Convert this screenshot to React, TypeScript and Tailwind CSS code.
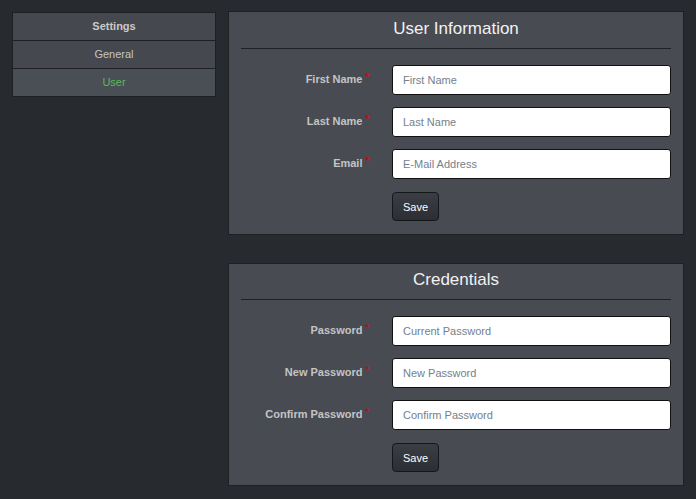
import React from 'react'

type Field = { label: string; placeholder: string; type?: string }

const userFields: Field[] = [
  { label: 'First Name', placeholder: 'First Name' },
  { label: 'Last Name', placeholder: 'Last Name' },
  { label: 'Email', placeholder: 'E-Mail Address', type: 'email' },
]

const credentialFields: Field[] = [
  { label: 'Password', placeholder: 'Current Password', type: 'password' },
  { label: 'New Password', placeholder: 'New Password', type: 'password' },
  { label: 'Confirm Password', placeholder: 'Confirm Password', type: 'password' },
]

function Panel({ title, fields, className = '' }: { title: string; fields: Field[]; className?: string }) {
  return (
    <div className={`border border-[#1e2024] bg-[#484b52] px-[12px] pb-[13px] ${className}`}>
      <h2 className="text-center text-[17px] leading-[20px] text-[#f2f2f2]">{title}</h2>
      <div className="mt-[9px] h-px bg-[#1f2125]" />
      <form className="mt-[16px] flex flex-col gap-[12px]" onSubmit={(e) => e.preventDefault()}>
        {fields.map((f) => (
          <div key={f.label} className="flex items-start">
            <label className="w-[151px] shrink-0 pr-[23px] pt-[7px] text-right text-[11px] leading-[15px] font-bold text-[#c4c4c4]">
              {f.label}
              <span className="ml-[3px] align-top text-[9px] leading-[9px] text-[#e00000]">*</span>
            </label>
            <input
              type={f.type ?? 'text'}
              placeholder={f.placeholder}
              className="h-[30px] flex-1 rounded-[3px] border border-[#111] bg-white pl-[10px] text-[11px] text-[#333] outline-none placeholder:text-[#74808d]"
            />
          </div>
        ))}
        <div className="flex">
          <div className="w-[151px] shrink-0" />
          <button
            type="submit"
            className="mt-px h-[29px] rounded-[4px] border border-[#15171a] bg-gradient-to-b from-[#3b3f45] to-[#2b2e33] px-[10px] pt-px text-[11px] text-white"
          >
            Save
          </button>
        </div>
      </form>
    </div>
  )
}

export default function App() {
  return (
    <div
      className="min-h-screen bg-[#272a2f] pt-[11px] pl-[12px] pr-[12px]"
      style={{ fontFamily: '"Liberation Sans", Arial, sans-serif' }}
    >
      <div className="flex items-start">
        <nav className="mt-px w-[204px] shrink-0 border border-[#1e2024] text-center text-[11px]">
          <div className="h-[27px] leading-[27px] bg-[#45484f] font-bold text-[#cacaca]">Settings</div>
          <div className="h-[28px] border-t border-[#1e2024] leading-[27px] bg-[#45484f] text-[#c4c4c4]">General</div>
          <div className="h-[28px] border-t border-[#1e2024] leading-[27px] bg-[#4a4f56] text-[#5cb85c]">User</div>
        </nav>
        <main className="ml-[12px] flex-1">
          <Panel title="User Information" fields={userFields} className="pt-[7px]" />
          <Panel title="Credentials" fields={credentialFields} className="mt-[28px] pt-[6px]" />
        </main>
      </div>
    </div>
  )
}
